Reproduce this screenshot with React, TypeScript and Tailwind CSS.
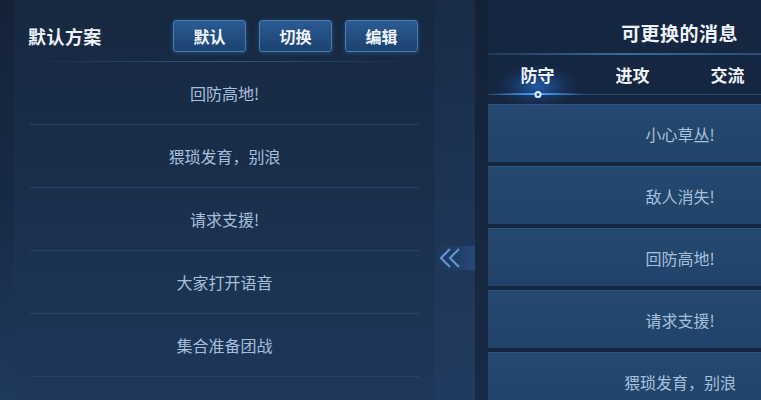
import React from "react"

const leftItems = ["回防高地!", "猥琐发育，别浪", "请求支援!", "大家打开语音", "集合准备团战"]
const rightItems = ["小心草丛!", "敌人消失!", "回防高地!", "请求支援!", "猥琐发育，别浪"]
const tabs = ["防守", "进攻", "交流"]
const buttons = ["默认", "切换", "编辑"]

const font = { fontFamily: '"Noto Sans CJK SC", "Noto Sans", sans-serif' }

function Chevrons() {
  return (
    <svg width="26" height="22" viewBox="0 0 26 22" fill="none">
      <path d="M12 2 L3 11 L12 20" stroke="#5f93d3" strokeWidth="2.2" strokeLinejoin="miter" />
      <path d="M21 2 L12 11 L21 20" stroke="#5f93d3" strokeWidth="2.2" strokeLinejoin="miter" />
    </svg>
  )
}

export default function App() {
  return (
    <div
      className="flex h-[400px] w-[761px] overflow-hidden bg-gradient-to-b from-[#142238] via-[#172a45] to-[#1f3a5d]"
      style={font}
    >
      {/* left panel */}
      <div className="ml-[14px] flex w-[421px] shrink-0 flex-col bg-gradient-to-b from-[#172840] via-[#1a2f4c] to-[#1e385a]">
        <div className="relative flex h-[62px] shrink-0 items-center justify-between pl-[14px] pr-[17px] pt-[10px]">
          <span className="text-[18px] font-bold tracking-wide text-[#eef3fa]">默认方案</span>
          <div className="flex gap-[13px]">
            {buttons.map((b) => (
              <div
                key={b}
                className="flex h-[32px] w-[73px] items-center justify-center rounded-[3px] border border-[#4a7bb3] bg-gradient-to-b from-[#2b5b93] to-[#1b4270] text-[16px] font-bold text-[#f2f6fc] shadow-[0_1px_4px_rgba(60,140,230,0.35)]"
              >
                {b}
              </div>
            ))}
          </div>
          <div className="absolute bottom-0 left-[10px] right-[10px] h-px bg-gradient-to-r from-transparent via-[#35587f] to-transparent" />
        </div>
        {leftItems.map((t) => (
          <div key={t} className="mx-[16px] flex h-[63px] shrink-0 items-center justify-center border-b border-[#2a4464]">
            <span className="text-[16px] text-[#a6bfdd]">{t}</span>
          </div>
        ))}
      </div>

      {/* middle strip */}
      <div className="flex w-[40px] shrink-0 flex-col bg-gradient-to-b from-[#192c47] via-[#1d3455] to-[#213b60] pt-[246px]">
        <div className="flex h-[24px] items-center bg-gradient-to-r from-transparent via-[#1f3c63] to-[#28497a] pl-[3px]">
          <Chevrons />
        </div>
      </div>
      <div className="w-[13px] shrink-0 bg-gradient-to-b from-[#132137] to-[#182b44]" />

      {/* right panel */}
      <div className="flex w-[273px] shrink-0 flex-col bg-[#152640]">
        <div className="relative flex h-[55px] shrink-0 items-center justify-end pr-[23px] pt-[11px]">
          <span className="text-[19px] font-bold tracking-wide text-[#eef3fa]">可更换的消息</span>
          <div className="absolute bottom-0 left-0 right-0 h-[2px] bg-gradient-to-r from-[#1f3a5c] via-[#3b6a9c] to-[#2a4d76]" />
        </div>
        <div className="relative flex h-[40px] shrink-0 border-b border-[#2d4a6e] pl-[2px]">
          {tabs.map((t, i) => (
            <div key={t} className="relative flex w-[95px] shrink-0 items-center justify-center">
              {i === 0 && (
                <>
                  <div className="absolute bottom-[-14px] left-[5px] right-[5px] h-[44px] rounded-full bg-[radial-gradient(ellipse_at_center,rgba(40,125,235,0.6),rgba(30,90,180,0.2)_45%,transparent_70%)]" />
                  <div className="absolute bottom-[-1px] left-0 right-0 h-[2px] bg-gradient-to-r from-transparent via-[#4aa6ff] to-transparent" />
                  <div className="absolute bottom-[-4px] left-1/2 h-[7px] w-[7px] -translate-x-1/2 rounded-full border-2 border-[#dff0ff] bg-[#1a4f8f]" />
                </>
              )}
              <span className="relative text-[17px] font-bold text-[#eef3fa]">{t}</span>
            </div>
          ))}
        </div>
        <div className="flex flex-col gap-[4px] pt-[9px]">
          {rightItems.map((t) => (
            <div
              key={t}
              className="flex h-[58px] w-[384px] shrink-0 items-center justify-center border-t border-[#2d5480] bg-gradient-to-b from-[#24486f] to-[#21436a]"
            >
              <span className="text-[16px] text-[#a7c0de]">{t}</span>
            </div>
          ))}
        </div>
      </div>
    </div>
  )
}
